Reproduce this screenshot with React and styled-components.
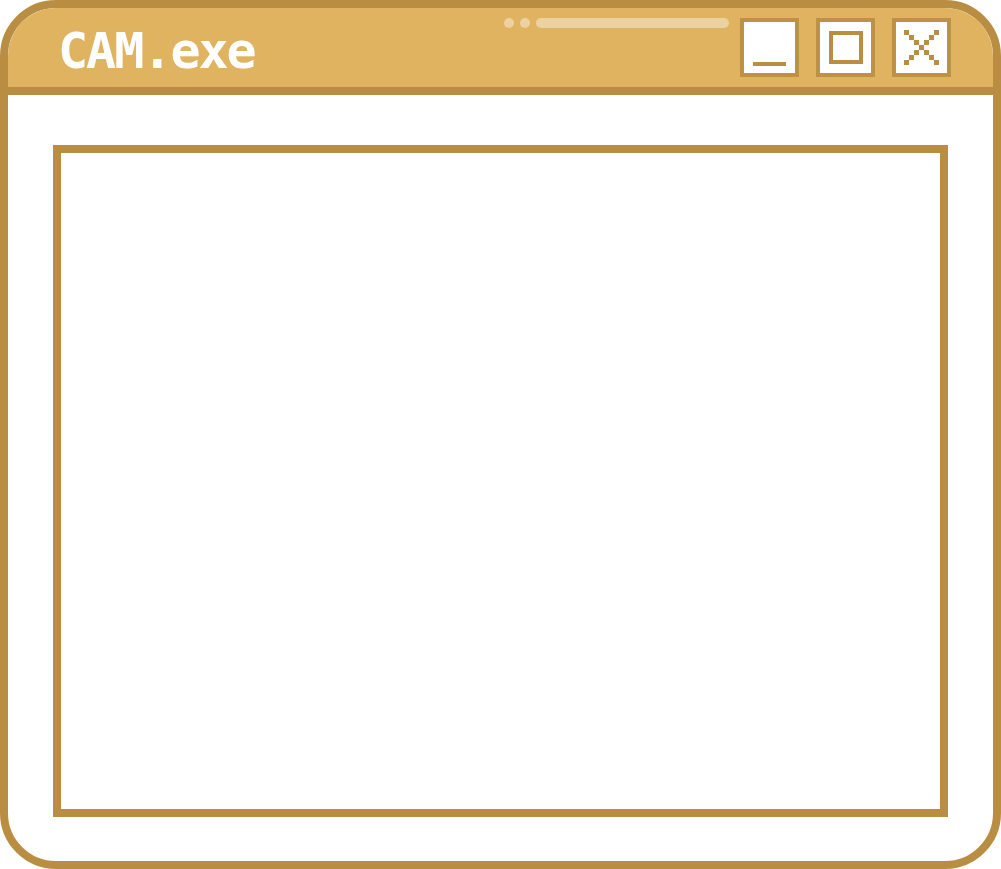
import React from "react";
import styled, { createGlobalStyle } from "styled-components";

const GlobalStyle = createGlobalStyle`
  html, body {
    margin: 0;
    padding: 0;
    background: #fff;
  }
  * {
    box-sizing: border-box;
  }
`;

const FRAME = "#b98e42";
const GOLD = "#e0b360";
const BTN_EDGE = "#bf9147";

const closePixels = [
  [0, 0], [1, 1], [2, 2], [3, 3], [4, 4], [5, 5], [6, 6],
  [6, 0], [5, 1], [4, 2], [2, 4], [1, 5], [0, 6],
];

const CloseIcon = () => (
  <svg width="35" height="35" viewBox="0 0 35 35" shapeRendering="crispEdges">
    {closePixels.map(([x, y]) => (
      <rect key={`${x}-${y}`} x={x * 5} y={y * 5} width="5" height="5" fill={FRAME} />
    ))}
  </svg>
);

export default function App() {
  return (
    <>
      <GlobalStyle />
      <S.Window>
        <S.TitleBar>
          <S.Title>CAM.exe</S.Title>
          <S.Decor>
            <S.Dot />
            <S.Dot />
            <S.Bar />
          </S.Decor>
          <S.Controls>
            <S.CtrlButton $align="flex-end">
              <S.MinLine />
            </S.CtrlButton>
            <S.CtrlButton>
              <S.MaxBox />
            </S.CtrlButton>
            <S.CtrlButton>
              <CloseIcon />
            </S.CtrlButton>
          </S.Controls>
        </S.TitleBar>
        <S.Body>
          <S.Viewport />
        </S.Body>
      </S.Window>
    </>
  );
}

const S = {};

S.Window = styled.div`
  width: 1001px;
  height: 869px;
  border: 8px solid ${FRAME};
  border-radius: 56px;
  overflow: hidden;
  display: flex;
  flex-direction: column;
  background: #fff;
`;

S.TitleBar = styled.div`
  height: 87px;
  flex-shrink: 0;
  background: ${GOLD};
  border-bottom: 8px solid ${FRAME};
  display: flex;
  align-items: center;
  padding: 0 42px 0 50px;
`;

S.Title = styled.div`
  font-family: "DejaVu Sans Mono", "Liberation Mono", monospace;
  font-weight: bold;
  font-size: 50px;
  letter-spacing: -2px;
  color: #fff;
  line-height: 1;
  margin-top: 6px;
`;

S.Decor = styled.div`
  margin-left: auto;
  align-self: flex-start;
  margin-top: 10px;
  display: flex;
  align-items: center;
  gap: 6px;
`;

S.Dot = styled.div`
  width: 10px;
  height: 10px;
  border-radius: 50%;
  background: #ecd2a2;
`;

S.Bar = styled.div`
  width: 193px;
  height: 10px;
  border-radius: 5px;
  background: #ecd2a2;
`;

S.Controls = styled.div`
  margin-left: 11px;
  display: flex;
  gap: 17px;
`;

S.CtrlButton = styled.div`
  width: 59px;
  height: 59px;
  border: 4px solid ${BTN_EDGE};
  background: #fff;
  display: flex;
  justify-content: center;
  align-items: ${(p) => p.$align || "center"};
  padding-bottom: ${(p) => (p.$align ? "7px" : "0")};
`;

S.MinLine = styled.div`
  width: 33px;
  height: 4px;
  background: ${FRAME};
`;

S.MaxBox = styled.div`
  width: 34px;
  height: 33px;
  border: 4px solid ${FRAME};
`;

S.Body = styled.div`
  flex: 1;
  padding: 50px 45px 44px 45px;
  display: flex;
`;

S.Viewport = styled.div`
  flex: 1;
  border: 8px solid ${FRAME};
`;
